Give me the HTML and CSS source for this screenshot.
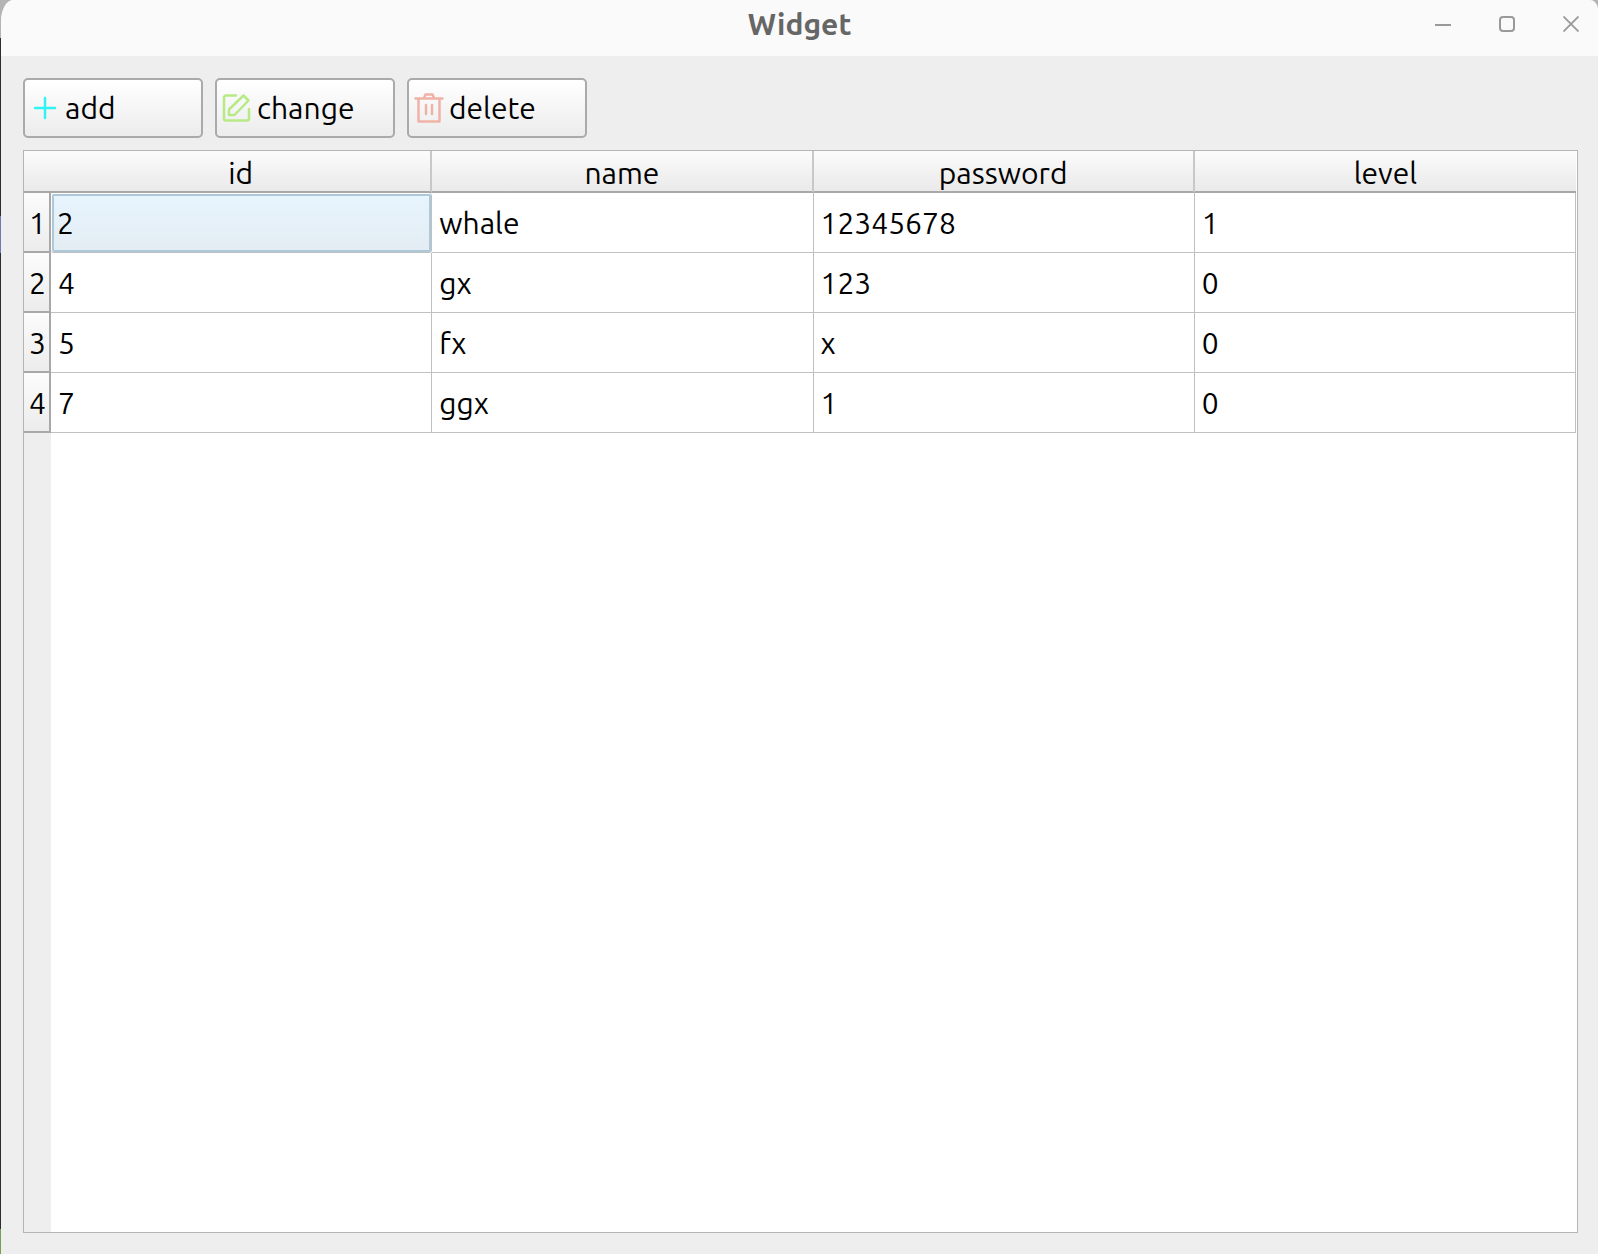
FILE: index.html
```html
<!DOCTYPE html>
<html lang="en">
<head>
<meta charset="utf-8">
<title>Widget</title>
<link rel="stylesheet" href="styles.css">
</head>
<body>
<div class="window">
  <header class="titlebar">
    <h1 class="title">Widget</h1>
    <div class="controls">
      <button class="control" type="button" aria-label="Minimize">
        <svg width="16" height="16" viewBox="0 0 16 16"><path d="M0 9h16" stroke-width="2"/></svg>
      </button>
      <button class="control" type="button" aria-label="Maximize">
        <svg width="16" height="16" viewBox="0 0 16 16"><rect x="1" y="1" width="14" height="14" rx="3" stroke-width="2"/></svg>
      </button>
      <button class="control" type="button" aria-label="Close">
        <svg width="16" height="16" viewBox="0 0 16 16"><path d="M.5.5l15 15M15.5.5l-15 15" stroke-width="1.8"/></svg>
      </button>
    </div>
  </header>
  <main class="content">
    <div class="toolbar">
      <button class="tool" type="button">
        <svg class="icon icon-add" viewBox="0 0 32 32"><path d="M6 16h20M16 6v20"/></svg>
        add
      </button>
      <button class="tool" type="button">
        <svg class="icon icon-change" viewBox="0 0 32 32"><path d="M15 3.500H5a2 2 0 0 0-2 2v21a2 2 0 0 0 2 2h21a2 2 0 0 0 2-2V17"/><path d="M8 23v-5.500L22.500 3.500l5 5L13.500 23z"/></svg>
        change
      </button>
      <button class="tool" type="button">
        <svg class="icon icon-delete" viewBox="0 0 32 32"><path d="M2.500 6.500h27M11 6l1.500-3.500h7L21 6M5.500 7v22.500h21V7M13 13v9M19 13v9"/></svg>
        delete
      </button>
    </div>
    <div class="table-frame">
      <table class="grid">
        <colgroup><col class="col-index"><col><col><col><col></colgroup>
        <thead>
          <tr><td class="corner"></td><th scope="col">id</th><th scope="col">name</th><th scope="col">password</th><th scope="col">level</th></tr>
        </thead>
        <tbody>
          <tr><th scope="row">1</th><td class="selected">2</td><td>whale</td><td>12345678</td><td>1</td></tr>
          <tr><th scope="row">2</th><td>4</td><td>gx</td><td>123</td><td>0</td></tr>
          <tr><th scope="row">3</th><td>5</td><td>fx</td><td>x</td><td>0</td></tr>
          <tr><th scope="row">4</th><td>7</td><td>ggx</td><td>1</td><td>0</td></tr>
        </tbody>
      </table>
    </div>
  </main>
</div>
</body>
</html>
```
FILE: styles.css
```css
* {
  box-sizing: border-box;
}

body {
  margin: 0;
  min-height: 100vh;
  display: flex;
  flex-direction: column;
  font-family: Ubuntu, "Noto Sans", sans-serif;
  font-size: 30px;
  color: #000;
  background: linear-gradient(#b4b4b4 0 38px, #2d2d2f 38px 216px, #6c7abb 216px 253px, #2d2d2f 253px calc(100% - 25px), #75a04f calc(100% - 25px));
}

.window {
  flex: 1;
  display: flex;
  flex-direction: column;
  margin-left: 1px;
  background: #eee;
  border-radius: 12px 8px 0 0 / 22px 10px 0 0;
  overflow: hidden;
}

.titlebar {
  display: grid;
  grid-template-columns: 1fr auto 1fr;
  align-items: center;
  height: 56px;
  padding: 0 11px 8px;
  background: #fafafa;
}

.title {
  grid-column: 2;
  margin: 0;
  font-size: 30px;
  line-height: 32px;
  font-weight: 700;
  color: #666;
}

.controls {
  display: flex;
  justify-content: flex-end;
  gap: 32px;
}

.control {
  display: flex;
  align-items: center;
  justify-content: center;
  width: 32px;
  height: 32px;
  padding: 0;
  border: 0;
  background: none;
}

.control svg {
  fill: none;
  stroke: #999;
}

.content {
  flex: 1;
  display: flex;
  flex-direction: column;
  gap: 12px;
  padding: 22px 20px 21px 22px;
}

.toolbar {
  display: flex;
  gap: 12px;
}

.tool {
  display: flex;
  align-items: center;
  gap: 4px;
  width: 180px;
  height: 60px;
  padding: 0 4px;
  border: 2px solid #aaa;
  border-radius: 5px;
  background: linear-gradient(#fff, #ececec);
  font: inherit;
  color: inherit;
}

.icon {
  width: 32px;
  height: 32px;
  fill: none;
  stroke-width: 2.5;
  stroke-linecap: round;
  stroke-linejoin: round;
}

.icon-add {
  stroke: #2ff3f5;
}

.icon-change {
  stroke: #b7ea86;
}

.icon-delete {
  stroke: #efb3a6;
}

.table-frame {
  flex: 1;
  padding-right: 1px;
  border: 1px solid #b5b5b5;
  background: linear-gradient(90deg, #eee 27px, #fff 27px);
}

.grid {
  width: 100%;
  table-layout: fixed;
  border-collapse: separate;
  border-spacing: 0;
}

.col-index {
  width: 27px;
}

.grid th {
  padding: 0;
  font-weight: 400;
  text-align: center;
}

.grid thead th,
.corner {
  height: 42px;
  padding: 4px 0 0;
  line-height: 36px;
  border-bottom: 2px solid #a8a8a8;
  background: linear-gradient(#fcfcfc, #f2f2f2 50%, #eaeaea);
}

.grid thead th {
  border-right: 2px solid #c8c8c8;
}

.grid thead th:last-child {
  border-right: 0;
}

.grid tbody th {
  height: 60px;
  padding: 2px 0 0 2px;
  line-height: 40px;
  border-right: 2px solid #a8a8a8;
  border-bottom: 2px solid #a8a8a8;
  background: linear-gradient(#fcfcfc, #ececec);
}

.grid tbody td {
  height: 60px;
  padding: 0 7px;
  line-height: 40px;
  border-right: 1px solid #c0c0c0;
  border-bottom: 1px solid #c0c0c0;
  background: #fff;
}

.grid tbody .selected {
  padding-left: 6px;
  background: linear-gradient(#e7f5fe, #e4ecf3);
  box-shadow: inset 0 0 0 1px #fff;
  outline: 2px solid #adc8d9;
  outline-offset: -3px;
  border-radius: 3px;
}
```
